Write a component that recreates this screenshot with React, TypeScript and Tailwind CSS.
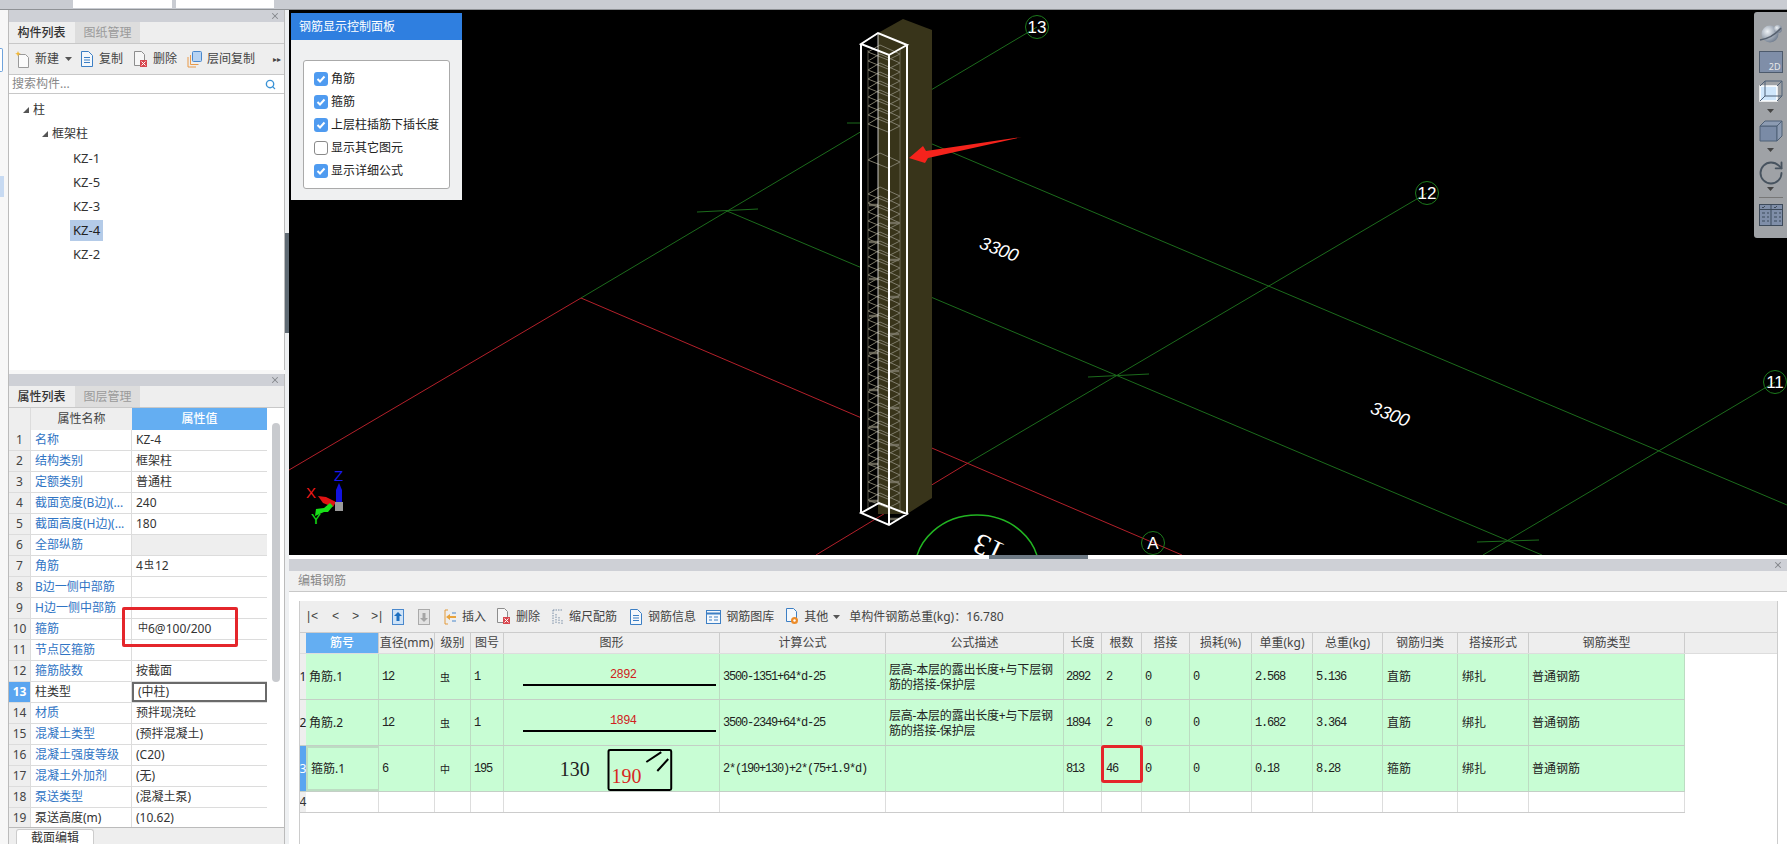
import { RotateCw, Search, X } from 'lucide-react'

const mono = "font-['Liberation_Mono','Noto_Sans_CJK_SC',monospace] text-[12px] tracking-[-1.2px]"

const props: [string, string, boolean?][] = [
  ['名称', 'KZ-4', true],
  ['结构类别', '框架柱', true],
  ['定额类别', '普通柱', true],
  ['截面宽度(B边)(...', '240', true],
  ['截面高度(H边)(...', '180', true],
  ['全部纵筋', '', true],
  ['角筋', '4|12', true],
  ['B边一侧中部筋', '', true],
  ['H边一侧中部筋', '', true],
  ['箍筋', '', true],
  ['节点区箍筋', '', true],
  ['箍筋肢数', '按截面', true],
  ['柱类型', '(中柱)', false],
  ['材质', '预拌现浇砼', true],
  ['混凝土类型', '(预拌混凝土)', true],
  ['混凝土强度等级', '(C20)', true],
  ['混凝土外加剂', '(无)', true],
  ['泵送类型', '(混凝土泵)', true],
  ['泵送高度(m)', '(10.62)', false],
]

const heads = ['筋号', '直径(mm)', '级别', '图号', '图形', '计算公式', '公式描述', '长度', '根数', '搭接', '损耗(%)', '单重(kg)', '总重(kg)', '钢筋归类', '搭接形式', '钢筋类型']

const gridCols = 'grid grid-cols-[6px_73px_56px_36px_33px_216px_166px_178px_38px_40px_48px_62px_61px_70px_75px_71px_156px]'

const desc = (
  <>
    层高-本层的露出长度+与下层钢
    <br />
    筋的搭接-保护层
  </>
)

const rebars = [
  { no: '1', name: '角筋.1', d: '12', lv: '虫', fig: '1', shape: '2892', f: '3500-1351+64*d-25', desc, len: '2892', n: '2', w: '2.568', t: '5.136', cat: '直筋' },
  { no: '2', name: '角筋.2', d: '12', lv: '虫', fig: '1', shape: '1894', f: '3500-2349+64*d-25', desc, len: '1894', n: '2', w: '1.682', t: '3.364', cat: '直筋' },
  { no: '3', name: '箍筋.1', d: '6', lv: '中', fig: '195', shape: '', f: '2*(190+130)+2*(75+1.9*d)', desc: null, len: '813', n: '46', w: '0.18', t: '8.28', cat: '箍筋' },
]

const DocIcon = ({ color = '#3d7fc4' }: { color?: string }) => (
  <svg width="14" height="16" viewBox="0 0 14 16" fill="none" stroke={color}>
    <path d="M1.5.5h7l4 4v11h-11z" fill="#f4f8fc" />
    <path d="M4 6.5h6M4 9h6M4 11.5h6" />
  </svg>
)

const NewIcon = () => (
  <svg width="15" height="17" viewBox="0 0 15 17" fill="none" stroke="#9a9a9a">
    <path d="M3.5 3.5h7l3 3v10h-10z" fill="#fbfbfb" />
    <path d="M3 0l.8 2 2 .8-2 .8L3 5.5l-.8-1.9-2-.8 2-.8z" fill="#f2b632" stroke="none" />
  </svg>
)

const DelIcon = () => (
  <svg width="15" height="17" viewBox="0 0 15 17" fill="none" stroke="#8d8d8d">
    <path d="M1.5.5h7l3 3v11h-10z" fill="#f6f6f6" />
    <rect x="7" y="9" width="7" height="7" fill="#d8474f" stroke="none" />
    <path d="M8.5 10.5l4 4M12.5 10.5l-4 4" stroke="#fff" />
  </svg>
)

const CopyLayerIcon = () => (
  <svg width="15" height="17" viewBox="0 0 15 17" fill="none">
    <path d="M1 6v10h8M3.5 4v9.5h8" stroke="#e89a4a" />
    <rect x="5.5" y="0.5" width="9" height="10" rx="1" fill="#b7d3f2" stroke="#4a88cc" />
  </svg>
)

const Caret = ({ color = '#555' }: { color?: string }) => (
  <svg width="7" height="4" viewBox="0 0 7 4">
    <path d="M0 0h7L3.5 4z" fill={color} />
  </svg>
)

const Tabs = ({ a, b }: { a: string; b: string }) => (
  <div className="flex h-[22px] bg-[#eeeeee] border-b border-[#c8c8c8]">
    <div className="w-[65px] flex items-center justify-center font-medium text-[#333]">{a}</div>
    <div className="w-[65px] ml-px flex items-center justify-center bg-[#dddddd] text-[#9a9a9a]">{b}</div>
  </div>
)

const PanelHead = () => (
  <div className="h-[12px] bg-[#ced0d6] flex items-center justify-end pr-[4px]">
    <X size={10} strokeWidth={2.5} color="#85878c" />
  </div>
)

const ToolBtn = ({ icon, label, cls }: { icon: React.ReactNode; label: string; cls: string }) => (
  <div className={`flex items-center ${cls}`}>
    {icon}
    <span className="ml-[5px] text-[#444] whitespace-nowrap">{label}</span>
  </div>
)

const TreeRow = ({ label, indent, sel, arrow }: { label: string; indent: string; sel?: boolean; arrow?: boolean }) => (
  <div className={`h-[24px] flex items-center ${indent}`}>
    {arrow && (
      <svg width="6" height="6" viewBox="0 0 6 6" className="mr-[4px]">
        <path d="M6 0v6H0z" fill="#555" />
      </svg>
    )}
    <span className={sel ? 'bg-[#b4cbe8] h-[21px] px-[3px] flex items-center text-[13px] text-[#222]' : arrow ? 'text-[#333]' : 'px-[3px] text-[13px] text-[#333]'}>
      {label}
    </span>
  </div>
)

const PropValue = ({ v }: { v: string }) => {
  if (v === '4|12') {
    return (
      <span>
        4<span className="text-[10px] relative -top-[2px] mx-[1px]">虫</span>12
      </span>
    )
  }
  return <span>{v}</span>
}

const PropRow = ({ i, name, value, blue }: { i: number; name: string; value: string; blue?: boolean }) => {
  const active = i === 13
  return (
    <div className="flex h-[21px] border-b border-[#dcdcdc]">
      <div className={`w-[22px] flex items-center justify-center border-r border-[#dcdcdc] ${active ? 'bg-[#5aa5f0] text-white font-bold' : 'bg-[#eeeeee] text-[#444]'}`}>{i}</div>
      <div className={`w-[101px] pl-[4px] flex items-center whitespace-nowrap overflow-hidden border-r border-[#dcdcdc] ${blue ? 'text-[#2f74c4]' : 'text-[#333]'}`}>{name}</div>
      <div className={`relative w-[135px] pl-[4px] flex items-center whitespace-nowrap text-[#333] ${i === 6 ? 'bg-[#eeeeee]' : ''} ${active ? 'border-2 border-[#6a6a6a] pl-[2px]' : ''}`}>
        {i === 10 && (
          <>
            <span className="ml-[2px]"><span className="text-[10px] relative -top-[2px]">中</span>6@100/200</span>
            <div className="absolute -left-[10px] -top-[12px] w-[116px] h-[40px] border-[3px] border-[#e4262b] rounded-[2px]" />
          </>
        )}
        {i !== 10 && <PropValue v={value} />}
      </div>
    </div>
  )
}

const Check = ({ label, on = true }: { label: string; on?: boolean }) => (
  <div className="flex items-center h-[23px]">
    <div className={`w-[14px] h-[14px] rounded-[3px] flex items-center justify-center ${on ? 'bg-[#4f9bf0]' : 'bg-white border border-[#8a8a8a]'}`}>
      {on && (
        <svg width="10" height="8" viewBox="0 0 10 8" fill="none" stroke="#fff" strokeWidth="2">
          <path d="M1.5 4l2.5 2.5L8.5 1.5" />
        </svg>
      )}
    </div>
    <span className="ml-[3px] text-[#222] whitespace-nowrap">{label}</span>
  </div>
)

const hatchA = Array.from({ length: 9 }, (_, i) => 52 + i * 9)
const hatchB = Array.from({ length: 35 }, (_, i) => 194 + i * 9)
const rods = Array.from({ length: 9 }, (_, i) => 205 + i * 37)

const Bubble = ({ x, y, t }: { x: number; y: number; t: string }) => (
  <>
    <circle cx={x} cy={y} r="11.5" stroke="#1c7a1c" />
    <text x={x} y={y + 6} textAnchor="middle" fill="#fff" fontSize="17" fontFamily="Liberation Sans">{t}</text>
  </>
)

const Scene = () => (
  <svg className="w-full h-full block" viewBox="289 10 1498 545" fill="none">
    {/* grid lines */}
    <g stroke="#1c6b1c" strokeWidth="1">
      <path d="M1037 27L581 298" />
      <path d="M968 463L1427 193" />
      <path d="M1775 382L1483 555" />
      <path d="M880 122L1787 505" />
      <path d="M727 211L1542 555" />
      <path d="M697 212L758 209M847 123h33M1088 377L1149 374M1477 542L1539 540" />
    </g>
    <g stroke="#b3202a" strokeWidth="1">
      <path d="M581 298L289 470" />
      <path d="M581 298L1182 555" />
      <path d="M968 463L816 555" />
    </g>

    {/* ghost column */}
    <path d="M878 33L903 19L932 30V498L907 514H878z" fill="#38341a" />
    <path d="M861 44H878V513H861z" fill="#000" />

    {/* rebar cage */}
    <g stroke="#7f7c6b" strokeWidth="1">
      <path d="M868 50V510M900 50V510" opacity="0.7" />
      {[...hatchA, 160, ...hatchB].map((y) => (
        <path key={y} d={`M868 ${y}L880 ${y - 7}L900 ${y + 2}L888 ${y + 8}z`} />
      ))}
      {rods.map((y) => (
        <path key={y} d={`M869 ${y}h9M889 ${y + 18}h10`} strokeWidth="2.5" opacity="0.8" />
      ))}
    </g>

    {/* column wireframe */}
    <g stroke="#ffffff">
      <path d="M878 33V503" strokeWidth="1" opacity="0.75" />
      <path d="M861 44L878 33L907 45L889 55zM861 44V513M889 55V525M907 45V514M861 513L879 503L907 514L889 525z" strokeWidth="2" />
    </g>

    {/* arrow */}
    <path d="M909 158L923 146L926 151L1022 137L928 158L925 163z" fill="#f5231c" />

    {/* bubbles */}
    <Bubble x={1037} y={27} t="13" />
    <Bubble x={1427} y={193} t="12" />
    <Bubble x={1775} y={382} t="11" />
    <Bubble x={1153} y={543} t="A" />
    <ellipse cx="977" cy="570" rx="62" ry="55" stroke="#22b522" strokeWidth="1.5" />
    <text transform="translate(993 539) rotate(205)" textAnchor="middle" fill="#fff" fontSize="30" fontFamily="Liberation Serif">13</text>

    <text transform="translate(997 255) rotate(21)" textAnchor="middle" fill="#fff" fontSize="18" fontStyle="italic" fontFamily="Liberation Sans">3300</text>
    <text transform="translate(1388 420) rotate(21)" textAnchor="middle" fill="#fff" fontSize="18" fontStyle="italic" fontFamily="Liberation Sans">3300</text>

    {/* axis gizmo */}
    <path d="M339 483l3 7v12h-6v-12z" fill="#1212e0" />
    <path d="M318 496l8 1 10 5-3 5-10-4z" fill="#e01212" />
    <path d="M333 506l-5 6-4 0-9 4 1-7 8-1 6-5z" fill="#18e018" />
    <rect x="335" y="502" width="8" height="9" fill="#9a9a9a" />
    <text x="334" y="481" fill="#1818f0" fontSize="15" fontFamily="Liberation Sans">Z</text>
    <text x="306" y="498" fill="#f01818" fontSize="15" fontFamily="Liberation Sans">X</text>
    <text x="311" y="524" fill="#18e018" fontSize="15" fontFamily="Liberation Sans">Y</text>
  </svg>
)

const ViewTools = () => (
  <div className="absolute right-0 top-[2px] w-[33px] h-[226px] bg-[#9fa2a6] rounded-l-[3px] flex flex-col items-center pt-[11px]">
    <svg width="24" height="20" viewBox="0 0 24 20">
      <defs>
        <radialGradient id="sph" cx="0.35" cy="0.35" r="0.8">
          <stop offset="0" stopColor="#eef2f6" />
          <stop offset="1" stopColor="#5e6c80" />
        </radialGradient>
      </defs>
      <circle cx="11" cy="11" r="8.5" fill="url(#sph)" />
      <circle cx="19" cy="6" r="4" fill="url(#sph)" />
      <path d="M1 17C8 16 16 12 22 5" stroke="#56606e" fill="none" strokeWidth="1.5" />
    </svg>
    <div className="mt-[8px] w-[24px] h-[22px] bg-[#7f8ea8] border border-[#4d5a6c] flex items-end justify-end pr-[1px]">
      <span className="text-[9px] leading-[11px] text-[#e8e8e8]">2D</span>
    </div>
    <svg className="mt-[7px]" width="24" height="22" viewBox="0 0 24 22" stroke="#ffffff" fill="none">
      <path d="M1 6h17v15H1z" fill="#cfe6fb" stroke="#fff" strokeWidth="1.5" />
      <path d="M1 6l5-5h17l-5 5M18 21l5-5V1M1 21l5-5h17M6 1v15" stroke="#4f6076" />
    </svg>
    <div className="mt-[7px] h-[4px] flex"><Caret color="#444" /></div>
    <svg className="mt-[7px]" width="24" height="22" viewBox="0 0 24 22" stroke="#4f6076">
      <path d="M1 6h17v15H1z" fill="#7a8ba6" />
      <path d="M1 6l5-5h17l-5 5zM18 6l5-5v15l-5 5z" fill="#8c9bb2" />
    </svg>
    <div className="mt-[6px] h-[4px] flex"><Caret color="#444" /></div>
    <RotateCw className="mt-[7px]" size={28} color="#47535f" strokeWidth={1.6} />
    <div className="h-[4px] flex"><Caret color="#444" /></div>
    <div className="mt-[6px] w-[24px] h-px bg-[#777]" />
    <svg className="mt-[5px]" width="24" height="23" viewBox="0 0 24 23" stroke="#3d4a5a" fill="#7f8ea8">
      <rect x="0.5" y="1.5" width="23" height="21" />
      <path d="M0.5 6.5h23M12 1.5v21M3 4l1 1 2-2M15 4l1 1 2-2M3 10h3M8 10h2M3 14h3M8 14h2M3 18h3M8 18h2M15 10h3M20 10h2M15 14h3M20 14h2M15 18h3M20 18h2" fill="none" />
    </svg>
  </div>
)

const Pager = ({ t }: { t: string }) => <span className={`${mono} text-[#444] whitespace-nowrap`}>{t}</span>

const TopToolbar = () => (
  <div className="h-[32px] bg-[#eeeeee] border-b border-[#cccccc] flex items-center pl-[5px] text-[#444]">
    <Pager t="|<" />
    <span className="ml-[15px]"><Pager t="<" /></span>
    <span className="ml-[14px]"><Pager t=">" /></span>
    <span className="ml-[13px]"><Pager t=">|" /></span>
    <svg className="ml-[9px]" width="12" height="16" viewBox="0 0 12 16">
      <rect x="0.5" y="0.5" width="11" height="15" fill="#cfe3f7" stroke="#4a88cc" />
      <path d="M6 3l4 4H7.5v5h-3V7H2z" fill="#1d6fc0" />
    </svg>
    <svg className="ml-[14px]" width="12" height="16" viewBox="0 0 12 16">
      <rect x="0.5" y="0.5" width="11" height="15" fill="#e2e2e2" stroke="#aaa" />
      <path d="M6 13l4-4H7.5V4h-3v5H2z" fill="#a5a5a5" />
    </svg>
    <ToolBtn
      cls="ml-[14px]"
      label="插入"
      icon={
        <svg width="13" height="16" viewBox="0 0 13 16" fill="none" stroke="#e39a3a">
          <path d="M1 1h3M1 15h3M1 1v14" />
          <path d="M2 8l4-3v2h6v2H6v2z" fill="#e8a33c" stroke="none" />
          <path d="M8 4h4M8 12h4" stroke="#4a88cc" />
        </svg>
      }
    />
    <div className="ml-[10px] flex items-center">
      <DelIcon />
      <span className="ml-[5px] whitespace-nowrap">删除</span>
    </div>
    <ToolBtn
      cls="ml-[12px]"
      label="缩尺配筋"
      icon={
        <svg width="12" height="16" viewBox="0 0 12 16" stroke="#7a8ea6" fill="none" strokeDasharray="1.5 1">
          <path d="M1 1v14M4 5v10M7 8v7M10 11v4M1 1h10" />
        </svg>
      }
    />
    <ToolBtn cls="ml-[12px]" label="钢筋信息" icon={<DocIcon />} />
    <ToolBtn
      cls="ml-[10px]"
      label="钢筋图库"
      icon={
        <svg width="15" height="14" viewBox="0 0 15 14" fill="#f4f8fc" stroke="#3d7fc4">
          <rect x="0.5" y="0.5" width="14" height="13" />
          <path d="M0.5 3.5h14" strokeWidth="2" />
          <path d="M3 7h3M8 7h4M3 10h3M8 10h4" />
        </svg>
      }
    />
    <ToolBtn
      cls="ml-[11px]"
      label="其他"
      icon={
        <svg width="14" height="17" viewBox="0 0 14 17" fill="none" stroke="#3d7fc4">
          <path d="M1.5.5h7l3 3v10h-10z" fill="#f4f8fc" />
          <circle cx="9.5" cy="12.5" r="3.5" fill="#ec8c2a" stroke="none" />
          <circle cx="9.5" cy="12.5" r="1.2" fill="#fff" stroke="none" />
        </svg>
      }
    />
    <span className="ml-[5px] flex"><Caret /></span>
    <span className="ml-[9px] whitespace-nowrap">单构件钢筋总重(kg)：16.780</span>
  </div>
)

const Hoop = () => (
  <svg width="216" height="46" viewBox="0 0 216 46" fill="none">
    <text x="71" y="30" textAnchor="middle" fontSize="20" fontFamily="Liberation Serif" fill="#222">130</text>
    <rect x="105" y="4" width="63" height="40" rx="1.5" stroke="#000" strokeWidth="2" />
    <text x="108" y="37" fontSize="20" fontFamily="Liberation Serif" fill="#d8281f">190</text>
    <path d="M143 16L158 6M154 25L165 13" stroke="#000" strokeWidth="2" />
  </svg>
)

const cell = 'flex items-center border-r border-[#bcdcc2] overflow-hidden whitespace-nowrap'

const RebarRow = ({ r }: { r: (typeof rebars)[number] }) => {
  const isActive = r.no === '3'
  return (
    <div className={`${gridCols} h-[46px] w-[1385px] bg-[#c8fdd4] border-b border-[#c4cfc6] text-[#222]`}>
      <div className={`flex items-center justify-center overflow-visible text-[12px] ${isActive ? 'bg-[#5aa5f0] text-white' : 'bg-[#eeeeee]'}`}>{r.no}</div>
      <div className={`${cell} pl-[3px] text-[12px] ${isActive ? 'border-2 border-[#5f6f60]' : ''}`}>{r.name}</div>
      <div className={`${cell} pl-[3px] ${mono}`}>{r.d}</div>
      <div className={`${cell} pl-[5px] text-[10px]`}>{r.lv}</div>
      <div className={`${cell} pl-[3px] ${mono}`}>{r.fig}</div>
      {r.shape ? (
        <div className="flex flex-col border-r border-[#bcdcc2] pt-[15px]">
          <span className="ml-[106px] font-['Liberation_Mono',monospace] text-[12px] tracking-[-0.6px] text-[#d02020]">{r.shape}</span>
          <div className="w-[193px] h-[2px] bg-black mt-[3px] ml-[19px]" />
        </div>
      ) : (
        <div className={cell}><Hoop /></div>
      )}
      <div className={`${cell} pl-[3px] ${mono}`}>{r.f}</div>
      <div className={`${cell} pl-[3px] leading-[15px] text-[12px] tracking-[-0.2px]`}>
        <span>{r.desc}</span>
      </div>
      <div className={`${cell} pl-[2px] ${mono}`}>{r.len}</div>
      <div className={`relative flex items-center border-r border-[#bcdcc2] pl-[4px] ${mono}`}>
        {r.n}
        {isActive && <div className="absolute -left-[1px] -top-[1px] w-[42px] h-[38px] border-[3px] border-[#e4262b] rounded-[3px]" />}
      </div>
      <div className={`${cell} pl-[3px] ${mono}`}>0</div>
      <div className={`${cell} pl-[3px] ${mono}`}>0</div>
      <div className={`${cell} pl-[3px] ${mono}`}>{r.w}</div>
      <div className={`${cell} pl-[3px] ${mono}`}>{r.t}</div>
      <div className={`${cell} pl-[4px] text-[12px]`}>{r.cat}</div>
      <div className={`${cell} pl-[4px] text-[12px]`}>绑扎</div>
      <div className={`${cell} pl-[3px] text-[12px]`}>普通钢筋</div>
    </div>
  )
}

export default function App() {
  return (
    <div className="w-[1787px] h-[844px] overflow-hidden bg-white flex flex-col text-[12px] leading-none font-['Noto_Sans','Noto_Sans_CJK_SC',sans-serif]">
      <div className="h-[10px] shrink-0 bg-[#c9ccd2] flex border-b border-[#8f9296] overflow-hidden">
        <div className="ml-[73px] w-[99px] h-[8px] bg-white" />
        <div className="ml-[4px] w-[98px] h-[8px] bg-white" />
      </div>

      <div className="flex flex-1 min-h-0">
        {/* far-left sliver */}
        <div className="w-[9px] shrink-0 bg-[#f7f7f7] border-r border-[#bbbbbb] flex flex-col pt-[38px]">
          <div className="w-[3px] h-[24px] border border-l-0 border-[#6fa3dc] rounded-r-[2px] bg-white" />
          <div className="w-[4px] h-[21px] mt-[104px] bg-[#c7daf2]" />
        </div>

        {/* component list + property panels */}
        <div className="w-[276px] shrink-0 flex flex-col">
          <div className="h-[360px] flex flex-col border-r border-[#bbbbbb]">
            <PanelHead />
            <Tabs a="构件列表" b="图纸管理" />
            <div className="h-[31px] bg-[#eeeeee] border-b border-[#c8c8c8] flex items-center pl-[6px]">
              <ToolBtn cls="" label="新建" icon={<NewIcon />} />
              <span className="ml-[6px] flex"><Caret /></span>
              <ToolBtn cls="ml-[8px]" label="复制" icon={<DocIcon />} />
              <ToolBtn cls="ml-[10px]" label="删除" icon={<DelIcon />} />
              <ToolBtn cls="ml-[10px]" label="层间复制" icon={<CopyLayerIcon />} />
              <span className="ml-[18px] text-[8px] text-[#444] whitespace-nowrap">▸▸</span>
            </div>
            <div className="h-[19px] bg-white border-b border-[#c8c8c8] flex items-center justify-between pl-[3px] pr-[8px]">
              <span className="text-[#888]">搜索构件...</span>
              <Search size={11} color="#3b93d6" strokeWidth={3} />
            </div>
            <div className="flex-1 bg-white pt-[4px]">
              <TreeRow label="柱" indent="pl-[14px]" arrow />
              <TreeRow label="框架柱" indent="pl-[33px]" arrow />
              <TreeRow label="KZ-1" indent="pl-[61px]" />
              <TreeRow label="KZ-5" indent="pl-[61px]" />
              <TreeRow label="KZ-3" indent="pl-[61px]" />
              <TreeRow label="KZ-4" indent="pl-[61px]" sel />
              <TreeRow label="KZ-2" indent="pl-[61px]" />
            </div>
          </div>

          <div className="h-[4px] bg-[#f7f7f7]" />

          <div className="flex-1 min-h-0 flex flex-col border-r border-[#bbbbbb]">
            <PanelHead />
            <Tabs a="属性列表" b="图层管理" />
            <div className="h-[420px] flex border-b border-[#bbbbbb] overflow-hidden">
              <div className="w-[258px] bg-white">
                <div className="flex h-[22px]">
                  <div className="w-[22px] bg-[#eeeeee] border-r border-[#dcdcdc]" />
                  <div className="w-[101px] bg-[#eeeeee] flex items-center justify-center text-[#444]">属性名称</div>
                  <div className="w-[135px] bg-[#64aef2] flex items-center justify-center text-white font-medium">属性值</div>
                </div>
                {props.map(([name, value, blue], i) => (
                  <PropRow key={name} i={i + 1} name={name} value={value} blue={blue} />
                ))}
              </div>
              <div className="flex-1 bg-white pl-[5px] pt-[15px]">
                <div className="w-[8px] h-[259px] rounded-[4px] bg-[#c8cace]" />
              </div>
            </div>
            <div className="flex-1 min-h-0 bg-[#eeeeee] pl-[7px] pt-[1px] overflow-hidden">
              <div className="w-[78px] h-[16px] bg-white border border-b-0 border-[#cccccc] rounded-t-[3px] text-[#333] flex items-center justify-center">截面编辑</div>
            </div>
          </div>
        </div>

        {/* splitter */}
        <div className="w-[4px] shrink-0 bg-[#eef0f2] flex flex-col pt-[223px]">
          <div className="h-[100px] bg-[#5f6a73]" />
        </div>

        <div className="flex-1 min-w-0 flex flex-col">
          <div className="relative h-[545px] shrink-0 bg-black overflow-hidden">
            <Scene />

            <div className="absolute left-[2px] top-[3px] w-[171px] h-[187px] bg-[#eff0f1]">
              <div className="h-[27px] bg-[#2f7fe0] text-white text-[12px] pl-[8px] flex items-center">钢筋显示控制面板</div>
              <div className="mx-[12px] mt-[20px] w-[147px] h-[129px] bg-white border border-[#aaaaaa] rounded-[3px] pl-[10px] pt-[6px]">
                <Check label="角筋" />
                <Check label="箍筋" />
                <Check label="上层柱插筋下插长度" />
                <Check label="显示其它图元" on={false} />
                <Check label="显示详细公式" />
              </div>
            </div>

            <ViewTools />
          </div>

          <div className="h-[4px] shrink-0 bg-white flex">
            <div className="ml-[700px] w-[99px] bg-[#6e7a85]" />
          </div>

          <div className="flex-1 min-h-0 flex flex-col">
            <div className="h-[12px] bg-[#ced0d6] flex items-center justify-end pr-[4px]">
              <X size={10} strokeWidth={2.5} color="#85878c" />
            </div>
            <div className="h-[21px] bg-[#f0f0f0] border-b border-[#c8c8c8] pl-[9px] flex items-center text-[#888]">编辑钢筋</div>
            <div className="flex-1 bg-white pt-[9px] pl-[10px] pr-[9px] min-h-0">
              <div className="h-full border-l border-r border-[#cccccc] overflow-hidden">
                <TopToolbar />
                <div className="bg-[#eeeeee] border-b border-[#dddddd]">
                  <div className={`${gridCols} h-[20px] w-[1385px] text-[#444]`}>
                    <div className="bg-[#eeeeee]" />
                    {heads.map((h, i) => (
                      <div key={h} className={`flex items-center justify-center whitespace-nowrap border-r border-[#cccccc] ${i === 0 ? 'bg-[#64aef2] text-white font-medium' : ''}`}>{h}</div>
                    ))}
                  </div>
                </div>
                {rebars.map((r) => (
                  <RebarRow key={r.no} r={r} />
                ))}
                <div className={`${gridCols} h-[21px] w-[1385px] border-b border-[#cccccc]`}>
                  <div className="bg-[#eeeeee] flex items-center justify-center text-[#333]">4</div>
                  {heads.map((h) => (
                    <div key={h} className="border-r border-[#dddddd]" />
                  ))}
                </div>
              </div>
            </div>
          </div>
        </div>
      </div>
    </div>
  )
}
